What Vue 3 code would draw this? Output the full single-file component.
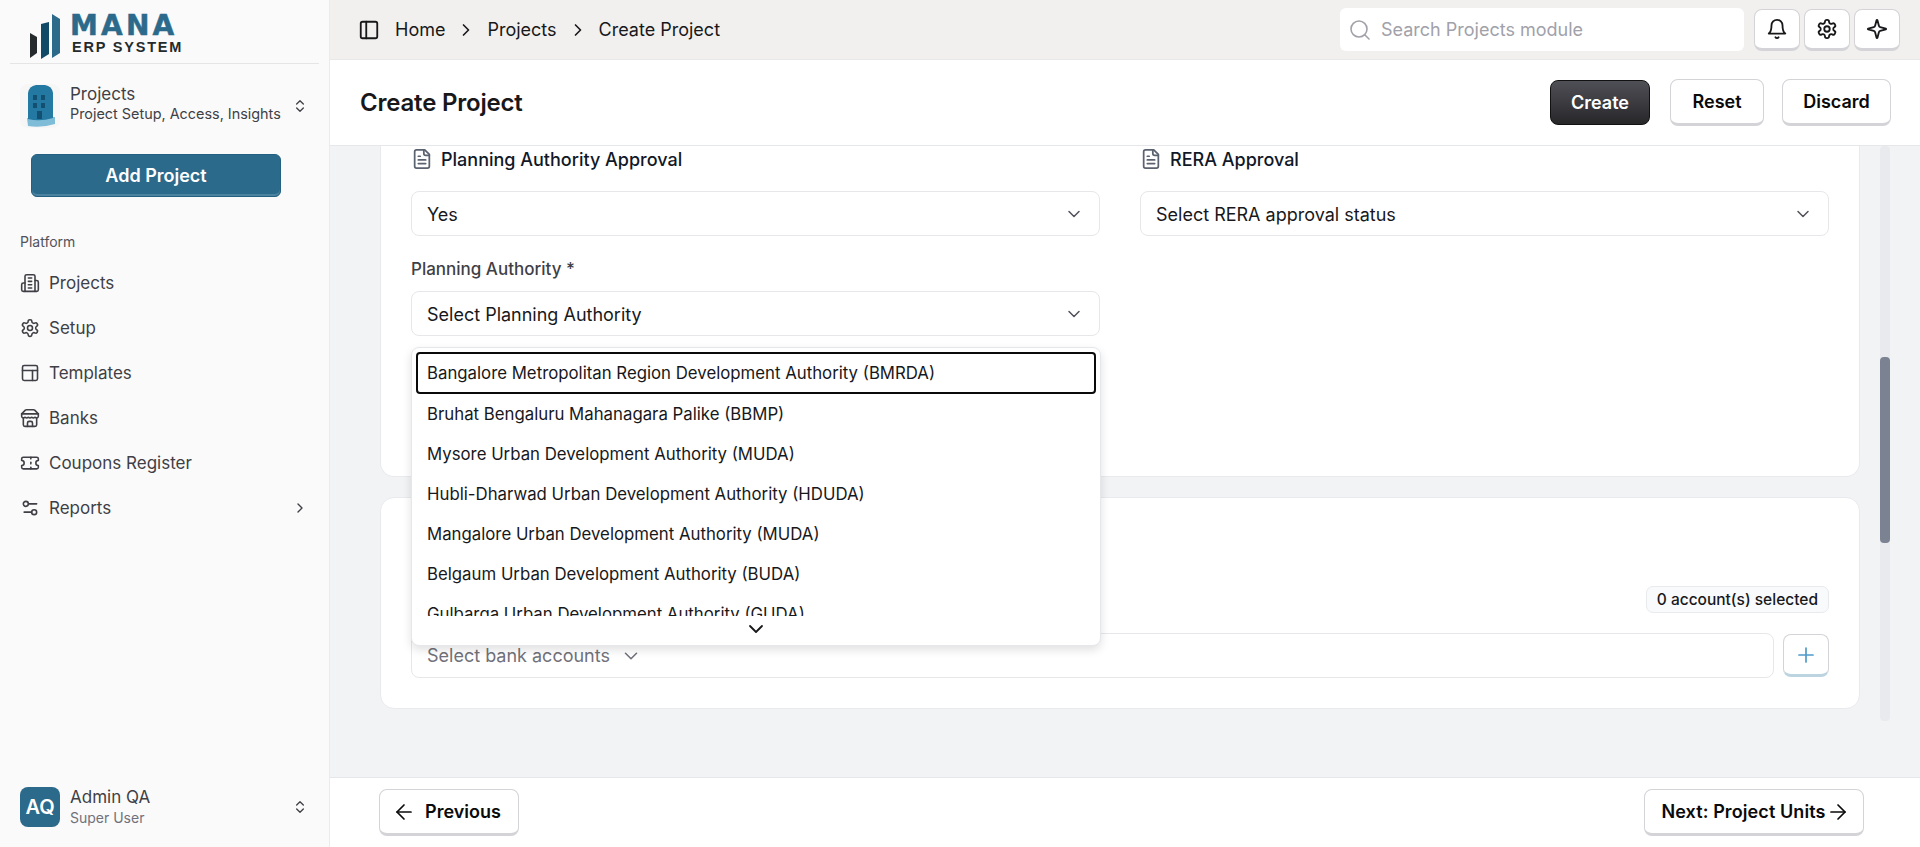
<script setup>
const I = {
  bld: ['M6 22V4a2 2 0 0 1 2-2h8a2 2 0 0 1 2 2v18Z','M6 12H4a2 2 0 0 0-2 2v6a2 2 0 0 0 2 2h2','M18 9h2a2 2 0 0 1 2 2v9a2 2 0 0 1-2 2h-2','M10 6h4','M10 10h4','M10 14h4','M10 18h4'],
  gear: ['M12.22 2h-.44a2 2 0 0 0-2 2v.18a2 2 0 0 1-1 1.73l-.43.25a2 2 0 0 1-2 0l-.15-.08a2 2 0 0 0-2.73.73l-.22.38a2 2 0 0 0 .73 2.73l.15.1a2 2 0 0 1 1 1.72v.51a2 2 0 0 1-1 1.74l-.15.09a2 2 0 0 0-.73 2.73l.22.38a2 2 0 0 0 2.73.73l.15-.08a2 2 0 0 1 2 0l.43.25a2 2 0 0 1 1 1.73V20a2 2 0 0 0 2 2h.44a2 2 0 0 0 2-2v-.18a2 2 0 0 1 1-1.73l.43-.25a2 2 0 0 1 2 0l.15.08a2 2 0 0 0 2.73-.73l.22-.39a2 2 0 0 0-.73-2.73l-.15-.08a2 2 0 0 1-1-1.74v-.5a2 2 0 0 1 1-1.74l.15-.09a2 2 0 0 0 .73-2.73l-.22-.38a2 2 0 0 0-2.73-.73l-.15.08a2 2 0 0 1-2 0l-.43-.25a2 2 0 0 1-1-1.73V4a2 2 0 0 0-2-2z','M15 12a3 3 0 1 1-6 0a3 3 0 1 1 6 0'],
  tpl: ['M5 3h14a2 2 0 0 1 2 2v14a2 2 0 0 1-2 2H5a2 2 0 0 1-2-2V5a2 2 0 0 1 2-2z','M3 9h18','M15 21V9'],
  store: ['m2 7 4.41-4.41A2 2 0 0 1 7.83 2h8.34a2 2 0 0 1 1.42.59L22 7','M4 12v8a2 2 0 0 0 2 2h12a2 2 0 0 0 2-2v-8','M15 22v-4a2 2 0 0 0-2-2h-2a2 2 0 0 0-2 2v4','M2 7h20','M22 7v3a2 2 0 0 1-2 2a2.7 2.7 0 0 1-1.59-.63.7.7 0 0 0-.82 0A2.7 2.7 0 0 1 16 12a2.7 2.7 0 0 1-1.59-.63.7.7 0 0 0-.82 0A2.7 2.7 0 0 1 12 12a2.7 2.7 0 0 1-1.59-.63.7.7 0 0 0-.82 0A2.7 2.7 0 0 1 8 12a2.7 2.7 0 0 1-1.59-.63.7.7 0 0 0-.82 0A2.7 2.7 0 0 1 4 12a2 2 0 0 1-2-2V7'],
  ticket: ['M2 9a3 3 0 0 1 0 6v2a2 2 0 0 0 2 2h16a2 2 0 0 0 2-2v-2a3 3 0 0 1 0-6V7a2 2 0 0 0-2-2H4a2 2 0 0 0-2 2Z','M13 5v2','M13 17v2','M13 11v2'],
  sliders: ['M20 7h-9','M14 17H5','M20 17a3 3 0 1 1-6 0a3 3 0 1 1 6 0','M10 7a3 3 0 1 1-6 0a3 3 0 1 1 6 0'],
  right: ['m9 18 6-6-6-6'],
  down: ['m6 9 6 6 6-6'],
  updown: ['m7 15 5 5 5-5','m7 9 5-5 5 5'],
  panel: ['M5 3h14a2 2 0 0 1 2 2v14a2 2 0 0 1-2 2H5a2 2 0 0 1-2-2V5a2 2 0 0 1 2-2z','M9 3v18'],
  search: ['M19 11a8 8 0 1 1-16 0a8 8 0 1 1 16 0','m21 21-4.3-4.3'],
  bell: ['M6 8a6 6 0 0 1 12 0c0 7 3 9 3 9H3s3-2 3-9','M10.3 21a1.94 1.94 0 0 0 3.4 0'],
  spark: ['M9.937 15.5A2 2 0 0 0 8.5 14.063l-6.135-1.582a.5.5 0 0 1 0-.962L8.5 9.936A2 2 0 0 0 9.937 8.5l1.582-6.135a.5.5 0 0 1 .963 0L14.063 8.5A2 2 0 0 0 15.5 9.937l6.135 1.581a.5.5 0 0 1 0 .964L15.5 14.063a2 2 0 0 0-1.437 1.437l-1.582 6.135a.5.5 0 0 1-.963 0z'],
  file: ['M15 2H6a2 2 0 0 0-2 2v16a2 2 0 0 0 2 2h12a2 2 0 0 0 2-2V7Z','M14 2v4a2 2 0 0 0 2 2h4','M10 9H8','M16 13H8','M16 17H8'],
  left: ['m12 19-7-7 7-7','M19 12H5'],
  arrow: ['M5 12h14','m12 5 7 7-7 7'],
  plus: ['M5 12h14','M12 5v14'],
}
const nav = [
  { label: 'Projects', icon: I.bld },
  { label: 'Setup', icon: I.gear },
  { label: 'Templates', icon: I.tpl },
  { label: 'Banks', icon: I.store },
  { label: 'Coupons Register', icon: I.ticket },
  { label: 'Reports', icon: I.sliders, more: true },
]
const options = [
  'Bangalore Metropolitan Region Development Authority (BMRDA)',
  'Bruhat Bengaluru Mahanagara Palike (BBMP)',
  'Mysore Urban Development Authority (MUDA)',
  'Hubli-Dharwad Urban Development Authority (HDUDA)',
  'Mangalore Urban Development Authority (MUDA)',
  'Belgaum Urban Development Authority (BUDA)',
  'Gulbarga Urban Development Authority (GUDA)',
]
</script>

<template>
  <div class="app">
    <aside class="side">
      <div class="logo">
        <svg class="mark" width="30" height="45" viewBox="0 0 30 45">
          <path d="M0 19 L7 23 V39 L0 44 Z" fill="#252a2c" />
          <path d="M11 10 L19 8 V40 L11 45 Z" fill="#114a66" />
          <path d="M22 0 L30 5 V39 L22 44 Z" fill="#2c6a8c" />
        </svg>
        <div class="logotext">
          <div class="mana">MANA</div>
          <div class="erp">ERP SYSTEM</div>
        </div>
      </div>
      <div class="module">
        <svg class="bimg" width="40" height="44" viewBox="0 0 40 44">
          <rect x="0" y="0" width="40" height="44" rx="8" fill="#f6f6f6" />
          <path d="M7 34 L35 33 L35 40 Q22 44 8 42 Z" fill="#7fbcd8" />
          <path d="M8 9 Q9 2 16 1 L25 1 Q32 2 33 9 V34 Q20 38 8 35 Z" fill="#2379a1" />
          <g fill="#134f70">
            <rect x="13" y="11" width="4" height="5" /><rect x="21" y="11" width="4" height="5" />
            <rect x="13" y="19" width="4" height="5" /><rect x="21" y="19" width="4" height="5" />
            <rect x="17" y="27" width="5" height="8" />
          </g>
        </svg>
        <div class="modtext">
          <div class="modname">Projects</div>
          <div class="modsub">Project Setup, Access, Insights</div>
        </div>
        <svg class="ic updown" viewBox="0 0 24 24"><path v-for="d in I.updown" :key="d" :d="d" /></svg>
      </div>
      <button class="add">Add Project</button>
      <div class="platform">Platform</div>
      <nav class="nav">
        <div v-for="n in nav" :key="n.label" class="navitem">
          <svg class="ic navic" viewBox="0 0 24 24"><path v-for="d in n.icon" :key="d" :d="d" /></svg>
          <span class="navlabel">{{ n.label }}</span>
          <svg v-if="n.more" class="ic more" viewBox="0 0 24 24"><path v-for="d in I.right" :key="d" :d="d" /></svg>
        </div>
      </nav>
      <div class="user">
        <div class="avatar">AQ</div>
        <div class="usertext">
          <div class="uname">Admin QA</div>
          <div class="urole">Super User</div>
        </div>
        <svg class="ic updown" viewBox="0 0 24 24"><path v-for="d in I.updown" :key="d" :d="d" /></svg>
      </div>
    </aside>

    <div class="main">
      <header class="topbar">
        <svg class="ic panel" viewBox="0 0 24 24"><path v-for="d in I.panel" :key="d" :d="d" /></svg>
        <span>Home</span>
        <svg class="ic crumb" viewBox="0 0 24 24"><path v-for="d in I.right" :key="d" :d="d" /></svg>
        <span>Projects</span>
        <svg class="ic crumb" viewBox="0 0 24 24"><path v-for="d in I.right" :key="d" :d="d" /></svg>
        <span>Create Project</span>
        <div class="search">
          <svg class="ic searchic" viewBox="0 0 24 24"><path v-for="d in I.search" :key="d" :d="d" /></svg>
          <span>Search Projects module</span>
        </div>
        <div class="iconbtns">
          <button class="iconbtn"><svg class="ic" viewBox="0 0 24 24"><path v-for="d in I.bell" :key="d" :d="d" /></svg></button>
          <button class="iconbtn"><svg class="ic" viewBox="0 0 24 24"><path v-for="d in I.gear" :key="d" :d="d" /></svg></button>
          <button class="iconbtn"><svg class="ic" viewBox="0 0 24 24"><path v-for="d in I.spark" :key="d" :d="d" /></svg></button>
        </div>
      </header>

      <div class="titlebar">
        <h1>Create Project</h1>
        <div class="actions">
          <button class="btn dark">Create</button>
          <button class="btn reset">Reset</button>
          <button class="btn discard">Discard</button>
        </div>
      </div>

      <div class="content">
        <div class="scroller">
          <section class="card first">
            <div class="cols">
              <div>
                <div class="head">
                  <svg class="ic fileic" viewBox="0 0 24 24"><path v-for="d in I.file" :key="d" :d="d" /></svg>
                  <span>Planning Authority Approval</span>
                </div>
                <div class="select"><span>Yes</span><svg class="ic chev" viewBox="0 0 24 24"><path v-for="d in I.down" :key="d" :d="d" /></svg></div>
                <label class="lbl">Planning Authority *</label>
                <div class="select"><span>Select Planning Authority</span><svg class="ic chev" viewBox="0 0 24 24"><path v-for="d in I.down" :key="d" :d="d" /></svg></div>
              </div>
              <div>
                <div class="head">
                  <svg class="ic fileic" viewBox="0 0 24 24"><path v-for="d in I.file" :key="d" :d="d" /></svg>
                  <span>RERA Approval</span>
                </div>
                <div class="select"><span>Select RERA approval status</span><svg class="ic chev" viewBox="0 0 24 24"><path v-for="d in I.down" :key="d" :d="d" /></svg></div>
              </div>
            </div>
          </section>
          <section class="card second">
            <div class="badgerow"><span class="badge">0 account(s) selected</span></div>
            <div class="bankrow">
              <div class="bank"><span>Select bank accounts</span><svg class="ic chev2" viewBox="0 0 24 24"><path v-for="d in I.down" :key="d" :d="d" /></svg></div>
              <button class="plus"><svg class="ic" viewBox="0 0 24 24"><path v-for="d in I.plus" :key="d" :d="d" /></svg></button>
            </div>
          </section>
        </div>
        <div class="track"><div class="thumb"></div></div>

        <div class="popup">
          <div class="list">
            <div v-for="(o, i) in options" :key="o" class="opt" :class="{ focus: i === 0 }">{{ o }}</div>
          </div>
          <div class="scrolldown"><svg class="ic" viewBox="0 0 24 24"><path v-for="d in I.down" :key="d" :d="d" /></svg></div>
        </div>
      </div>

      <footer class="footer">
        <button class="btn prev"><svg class="ic" viewBox="0 0 24 24"><path v-for="d in I.left" :key="d" :d="d" /></svg><span>Previous</span></button>
        <button class="btn next"><span>Next: Project Units</span><svg class="ic" viewBox="0 0 24 24"><path v-for="d in I.arrow" :key="d" :d="d" /></svg></button>
      </footer>
    </div>
  </div>
</template>

<style>
html, body { margin: 0; height: 100%; overflow: hidden; }
</style>

<style scoped>
* { box-sizing: border-box; }
.app { display: flex; width: 1920px; height: 847px; font-family: Inter, "Liberation Sans", sans-serif; color: #111827; overflow: hidden; }
.ic { width: 22px; height: 22px; fill: none; stroke: currentColor; stroke-width: 2; stroke-linecap: round; stroke-linejoin: round; flex: none; display: block; }
button { font-family: inherit; background: #fff; padding: 0; cursor: pointer; }

.side { width: 330px; flex: none; background: #fafafa; border-right: 1px solid #ebebee; display: flex; flex-direction: column; }
.logo { height: 64px; margin: 0 10px; border-bottom: 1px solid #e5e5e5; display: flex; padding: 14px 0 0 20px; gap: 12px; flex: none; }
.logotext { margin-top: 1px; }
.mana { font-family: "DejaVu Sans", sans-serif; font-weight: 700; font-size: 28px; line-height: 22px; letter-spacing: 3.2px; color: #2c6a8c; margin-left: -2px; -webkit-text-stroke: 0.5px #2c6a8c; }
.erp { font-family: "Liberation Sans", sans-serif; font-weight: 700; font-size: 14.5px; line-height: 12px; letter-spacing: 1.8px; color: #252a2c; margin-top: 4px; }
.module { display: flex; align-items: center; padding: 0 20px; height: 84px; flex: none; }
.bimg { flex: none; }
.modtext { margin-left: 10px; flex: 1; margin-bottom: 4px; }
.modname { font-size: 17px; line-height: 20px; color: #3f3f46; }
.modsub { font-size: 14.4px; line-height: 20px; color: #3f3f46; }
.updown { width: 16px; height: 16px; color: #3f3f46; stroke-width: 2; margin-right: 1px; }
.add { display: block; flex: none; width: 250px; height: 43px; margin: 6px 0 0 31px; background: #2c6a8c; color: #fff; border: 1px solid #24607f; border-radius: 6px; box-shadow: inset 0 -2px 0 #4c83a1; font-size: 18px; font-weight: 600; padding-bottom: 1px; }
.platform { margin: 36px 0 0 20px; font-size: 14px; line-height: 18px; color: #52525b; }
.nav { margin-top: 9px; padding-left: 20px; padding-right: 20px; }
.navitem { display: flex; align-items: center; height: 45px; gap: 9px; color: #3f3f46; font-size: 17px; }
.navic { width: 20px; height: 20px; stroke-width: 1.9; }
.navlabel { flex: 1; }
.more { width: 16px; height: 16px; margin-right: 1px; }
.user { margin-top: auto; height: 60px; margin-bottom: 10px; padding: 0 20px 0 20px; display: flex; align-items: center; flex: none; }
.avatar { width: 40px; height: 40px; border-radius: 8px; background: #2c6a8c; color: #fff; font-weight: 600; font-size: 20px; display: flex; align-items: center; justify-content: center; flex: none; }
.usertext { margin-left: 10px; flex: 1; }
.uname { font-size: 17px; line-height: 21px; color: #3f3f46; }
.urole { font-size: 14px; line-height: 20px; color: #71717a; }

.main { flex: 1; min-width: 0; display: flex; flex-direction: column; height: 847px; }
.topbar { height: 60px; flex: none; background: #f1f0ee; border-bottom: 1px solid #e8e8e8; display: flex; align-items: center; padding: 0 20px 0 30px; font-size: 18px; color: #18181b; }
.panel { margin-right: 15px; margin-left: -2px; }
.crumb { width: 20px; height: 20px; margin: 0 11px; }
.search { margin-left: auto; width: 404px; height: 43px; background: #fff; border-radius: 6px; display: flex; align-items: center; padding-left: 8px; color: #a1a1aa; font-size: 18px; }
.searchic { width: 24px; height: 24px; margin-right: 9px; stroke-width: 1.6; }
.iconbtns { display: flex; gap: 4px; margin-left: 10px; }
.iconbtn { width: 46px; height: 42px; border: 1px solid #d4d4d8; border-bottom: 3px solid #d4d4d8; border-radius: 8px; display: flex; align-items: center; justify-content: center; color: #18181b; }

.titlebar { height: 86px; flex: none; background: #fff; border-bottom: 1px solid #e5e7eb; display: flex; align-items: center; padding: 0 29px 0 30px; }
h1 { margin: 0; font-size: 24px; font-weight: 600; color: #18181b; letter-spacing: -0.2px; }
.actions { margin-left: auto; display: flex; gap: 20px; align-items: center; }
.btn { height: 47px; border: 1px solid #d4d4d8; border-bottom: 3px solid #d4d4d8; border-radius: 8px; font-size: 18px; font-weight: 600; color: #0a0a0a; }
.dark { width: 100px; height: 45px; background: linear-gradient(#4f4f56, #27272a); border: 1px solid #111; color: #fff; }
.reset { width: 94px; }
.discard { width: 109px; margin-left: -2px; }

.content { position: relative; flex: 1; min-height: 0; background: #f2f3f5; display: flex; align-items: flex-start; padding-left: 50px; }
.scroller { width: 1480px; display: flex; flex-direction: column; gap: 20px; }
.card { background: #fff; border: 1px solid #e9eaee; padding: 0 30px; }
.first { height: 331px; border-top: 0; border-radius: 0 0 14px 14px; }
.second { height: 212px; border-radius: 14px; }
.cols { display: grid; grid-template-columns: 689px 689px; gap: 40px; }
.head { display: flex; align-items: center; gap: 8px; height: 26px; font-size: 18px; font-weight: 500; color: #111827; }
.fileic { color: #5b6270; width: 22px; height: 22px; stroke-width: 1.9; }
.select { height: 45px; border: 1px solid #e7e7ea; border-radius: 8px; display: flex; align-items: center; justify-content: space-between; padding: 1px 15px 0 15px; font-size: 18px; color: #18181b; margin-top: 19px; }
.chev { width: 20px; height: 20px; color: #52525b; stroke-width: 1.8; }
.lbl { display: block; margin-top: 23px; font-size: 17px; line-height: 20px; font-weight: 500; color: #3f3f46; }
.select + .lbl + .select { margin-top: 12px; }
.badgerow { display: flex; justify-content: flex-end; margin-top: 88px; }
.badge { height: 27px; padding: 0 10px; border: 1px solid #e9eaee; background: #f9fafb; border-radius: 7px; font-size: 15.5px; font-weight: 500; display: flex; align-items: center; color: #18181b; }
.bankrow { display: flex; gap: 9px; margin-top: 20px; }
.bank { width: 1363px; height: 45px; border: 1px solid #e7e7ea; border-radius: 8px; display: flex; align-items: center; gap: 10px; padding: 0 15px; font-size: 18px; color: #71717a; flex: none; }
.chev2 { stroke-width: 1.7; }
.plus { width: 47px; height: 43px; margin-top: 1px; border: 1px solid #d4d4d8; border-bottom: 3px solid #bcd3e0; border-radius: 8px; color: #4f9ac8; display: flex; align-items: center; justify-content: center; }
.plus .ic { width: 24px; height: 24px; stroke-width: 1.7; }
.track { width: 10px; height: 575px; margin-left: 20px; background: #e9eaee; border-radius: 4px; padding-top: 211px; flex: none; }
.thumb { width: 10px; height: 186px; background: #7b8292; border-radius: 4px; }

.popup { position: absolute; left: 81px; top: 201px; width: 690px; height: 299px; background: #fff; border: 1px solid #e5e7eb; border-radius: 8px; box-shadow: 0 4px 10px rgba(0,0,0,.12); padding: 4px; display: flex; flex-direction: column; }
.list { height: 264px; overflow: hidden; flex: none; }
.opt { height: 40px; display: flex; align-items: center; padding-left: 9px; font-size: 16.8px; color: #18181b; border: 2px solid transparent; border-radius: 4px; white-space: nowrap; }
.focus { height: 42px; border-color: #0a0a0a; }
.scrolldown { display: flex; justify-content: center; margin-top: 1px; color: #18181b; }
.scrolldown .ic { width: 24px; height: 24px; stroke-width: 1.8; }

.footer { height: 70px; flex: none; background: #fff; border-top: 1px solid #e5e7eb; display: flex; align-items: center; justify-content: space-between; padding: 0 56px 0 49px; }
.prev { width: 140px; display: flex; align-items: center; justify-content: center; gap: 9px; padding-right: 5px; }
.next { width: 220px; display: flex; align-items: center; justify-content: center; gap: 0; letter-spacing: 0.1px; padding-left: 3px; }
.prev .ic, .next .ic { width: 24px; height: 24px; stroke-width: 1.7; }
</style>
